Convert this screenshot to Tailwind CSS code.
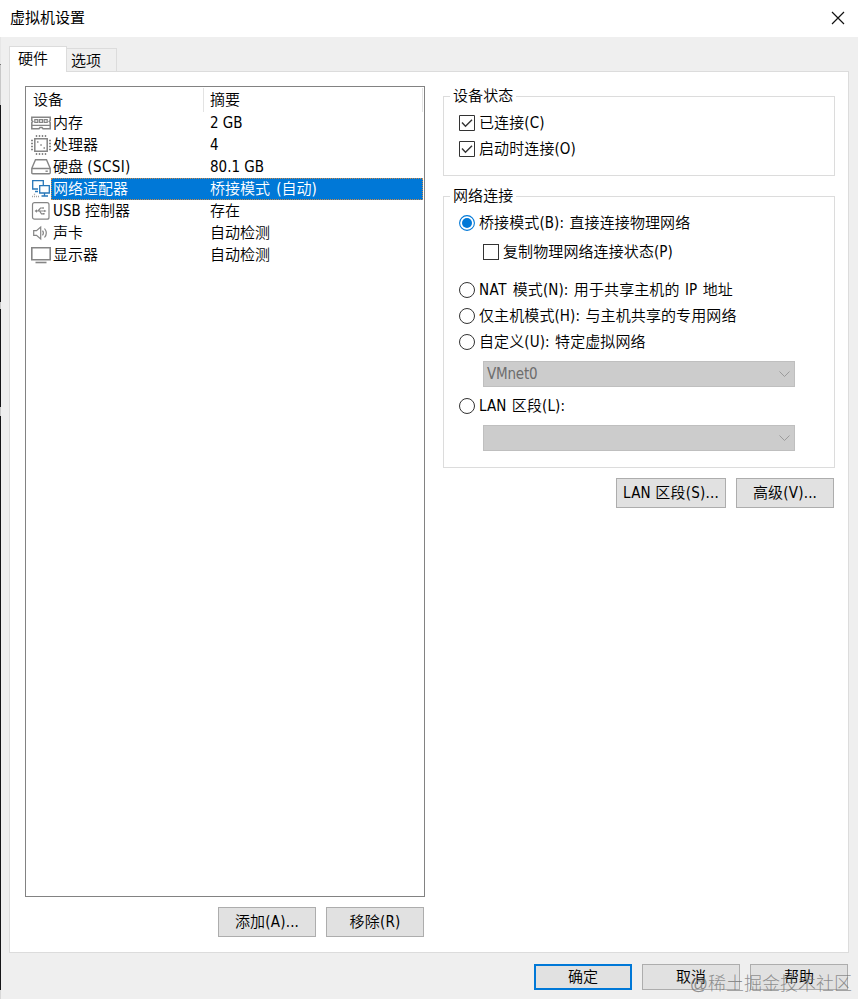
<!DOCTYPE html>
<html lang="zh-CN">
<head>
    <meta charset="UTF-8">
    <meta name="viewport" content="width=device-width, initial-scale=1.0">
    <title>虚拟机设置</title>
    <script src="https://cdn.jsdelivr.net/npm/@tailwindcss/browser@4"></script>
</head>
<body class="relative flex w-[858px] h-[999px] overflow-hidden bg-[#efefef] text-black text-[15px] leading-[20px] font-['DejaVu_Sans_Condensed','Noto_Sans_CJK_SC',sans-serif] font-[350] whitespace-nowrap">
    <div class="flex w-full flex-col">
        <!-- title bar -->
        <header class="flex h-[37px] shrink-0 items-center justify-between bg-white pb-px pl-[10px] pr-[13px]">
            <h1 class="font-normal">虚拟机设置</h1>
            <button aria-label="关闭"><svg class="block size-[14px]" viewBox="0 0 14 14" fill="none" stroke="#111" stroke-width="1.2"><path d="M1 1l12 12M13 1L1 13"/></svg></button>
        </header>

        <div class="flex flex-1">
            <!-- edge of the window behind -->
            <div class="flex w-px shrink-0 flex-col bg-[#161618]">
                <div class="h-[27px] bg-[#e6e6e6]"></div>
                <div class="h-px bg-[#777]"></div>
                <div class="h-[40px] bg-[#c8c8c8]"></div>
                <div class="h-[197px]"></div>
                <div class="h-[7px] bg-[#c8c8c8]"></div>
                <div class="h-[98px]"></div>
                <div class="h-[9px] bg-[#c8c8c8]"></div>
                <div class="h-[574px]"></div>
                <div class="h-[9px] bg-[#d8d8d8]"></div>
            </div>

            <div class="flex flex-1 flex-col pt-[9px] pl-[8px] pr-[9px]">
                <nav class="flex h-[25px] shrink-0 items-end">
                    <div class="relative z-10 h-[26px] w-[58px] self-start border border-b-0 border-[#dcdcdc] bg-white pl-[8px] pt-[2px]">硬件</div>
                    <div class="h-[23px] w-[50px] border border-b-0 border-l-0 border-[#dcdcdc] pl-[4px] pt-[2px]">选项</div>
                </nav>

                <main class="flex h-[882px] shrink-0 border border-[#dcdcdc] bg-white pl-[15px] pt-[14px]">
                    <section class="w-[400px] shrink-0">
                        <div class="h-[811px] border border-[#828282] bg-white">
                            <div class="flex h-[25px] pt-px">
                                <div class="h-[24px] w-[178px] border-r border-[#e3e3e3] pl-[7px] pt-[2px]">设备</div>
                                <div class="h-[24px] w-[219px] border-r border-[#e3e3e3] pl-[6px] pt-[2px]">摘要</div>
                            </div>

                            <div class="flex h-[22px] items-center pl-[5px]">
                                <svg class="h-[20px] w-[20px] shrink-0" viewBox="0 0 20 20" fill="none" stroke="#858585" stroke-width="1.5"><path d="M.8 4.2h18.4v3.3l-1 1 1 1v6.3H12l-1-1.300H9l-1 1.300H.8V9.500l1-1-1-1z"/><path d="M3.800 6.700h3v2.600h-3zM8.500 6.700h3v2.600h-3zM13.200 6.700h3v2.600h-3zM1 12.300h18" stroke-width="1.2"/></svg>
                                <div class="w-[159px] pl-[2px]">内存</div><div>2 GB</div>
                            </div>
                            <div class="flex h-[22px] items-center pl-[5px]">
                                <svg class="h-[20px] w-[20px] shrink-0" viewBox="0 0 20 20" fill="none" stroke="#858585"><path d="M3.800 3.800h12.400v12.400H3.800z" stroke-width="1.500"/><path d="M5.500 0v2M8.500 0v2M11.500 0v2M14.500 0v2M5.500 18v2M8.500 18v2M11.500 18v2M14.500 18v2M0 5.500h2M0 8.500h2M0 11.500h2M0 14.500h2M18 5.500h2M18 8.500h2M18 11.500h2M18 14.500h2M6 7h1.500M9.300 10h1.500M12.500 13h1.500" stroke-width="1.400"/></svg>
                                <div class="w-[159px] pl-[2px]">处理器</div><div>4</div>
                            </div>
                            <div class="flex h-[22px] items-center pl-[5px]">
                                <svg class="h-[20px] w-[20px] shrink-0" viewBox="0 0 20 20" fill="none" stroke="#858585" stroke-width="1.400"><path d="M4.500 2.700h11l3.700 8.600v4.500q0 1-1 1H1.800q-1 0-1-1v-4.500zM1 11.500h18"/><path d="M14.500 14.200h2.300"/></svg>
                                <div class="w-[159px] pl-[2px]">硬盘 <span class="tracking-[0.4px]">(SCSI)</span></div><div>80.1 GB</div>
                            </div>
                            <div class="flex h-[22px] items-center pl-[5px]">
                                <svg class="h-[20px] w-[20px] shrink-0" viewBox="0 0 20 20" fill="none" stroke="#2877b8" stroke-width="1.300"><path d="M7 10H1.700V1.700h10.600V6M4 12.500h3"/><path d="M8.700 6.700h9.600V14H8.700zM13.500 14v2.700M10.500 17h6.500"/><path d="M1 17.500h7M3.500 14.800v2.500" stroke="#a0a0a0" stroke-dasharray="1 1"/></svg>
                                <div class="flex h-[22px] w-[372px] items-center border border-dotted border-[#c98a4b] bg-[#0078d7] text-white">
                                    <div class="w-[158px] pl-px">网络适配器</div><div class="[word-spacing:2px]">桥接模式 (自动)</div>
                                </div>
                            </div>
                            <div class="flex h-[22px] items-center pl-[5px]">
                                <svg class="h-[20px] w-[20px] shrink-0" viewBox="0 0 20 20" fill="none" stroke="#858585" stroke-width="1.200"><rect x="1.500" y="1.700" width="16.500" height="16.500" rx="2"/><path d="M5 10h9M7 10l2.500-3h2M8.500 10l2 2.800h2"/><path d="M3.500 10l2.500-1.700v3.400zM13.200 8.800l2.300 1.200-2.300 1.200zM11.300 6.200h1.600v1.600h-1.600zM12 12h1.600v1.600H12z" fill="#858585" stroke="none"/></svg>
                                <div class="w-[159px] pl-[2px]">USB 控制器</div><div>存在</div>
                            </div>
                            <div class="flex h-[22px] items-center pl-[5px]">
                                <svg class="h-[20px] w-[20px] shrink-0" viewBox="0 0 20 20" fill="none" stroke="#858585" stroke-width="1.200"><path d="M2.700 7.700h2.800L9.700 4v12l-4.200-3.700H2.700z"/><path d="M11.500 7.700q1.800 2.300 0 4.600M13.500 5.500q3.600 4.500 0 9"/></svg>
                                <div class="w-[159px] pl-[2px]">声卡</div><div>自动检测</div>
                            </div>
                            <div class="flex h-[22px] items-center pl-[5px]">
                                <svg class="h-[20px] w-[20px] shrink-0" viewBox="0 0 20 20" fill="none" stroke="#858585" stroke-width="1.600"><path d="M.8 2.800h18.400v11.900H.8z"/><path d="M4.500 17.500h11"/></svg>
                                <div class="w-[159px] pl-[2px]">显示器</div><div>自动检测</div>
                            </div>
                        </div>
                        <div class="mt-[10px] flex justify-end gap-[10px] pr-px">
                            <button class="h-[30px] w-[98px] border border-[#adadad] bg-[#e1e1e1] tracking-[0.2px]">添加(A)...</button>
                            <button class="h-[30px] w-[98px] border border-[#adadad] bg-[#e1e1e1] tracking-[0.2px]">移除(R)</button>
                        </div>
                    </section>

                    <section class="ml-[18px] w-[392px] shrink-0 tracking-[0.1px] [word-spacing:1px]">
                        <fieldset class="h-[90px] border border-[#dcdcdc]">
                            <legend class="ml-[6px] h-[20px] px-[3px]">设备状态</legend>
                            <div class="flex flex-col gap-[6px] pl-[15px] pt-[7px]">
                                <label class="flex items-center gap-[4px]"><svg class="size-[16px]" viewBox="0 0 16 16" fill="none" stroke="#333"><path d="M.5.5h15v15H.5z"/><path d="M3 7.500l3.500 3.700L13 4.700" stroke-width="1.400"/></svg>已连接(C)</label>
                                <label class="flex items-center gap-[4px]"><svg class="size-[16px]" viewBox="0 0 16 16" fill="none" stroke="#333"><path d="M.5.5h15v15H.5z"/><path d="M3 7.500l3.500 3.700L13 4.700" stroke-width="1.400"/></svg>启动时连接(O)</label>
                            </div>
                        </fieldset>

                        <fieldset class="mt-[10px] h-[282px] border border-[#dcdcdc]">
                            <legend class="ml-[6px] h-[20px] px-[3px]">网络连接</legend>
                            <div class="flex flex-col pl-[15px] pt-[7px]">
                                <label class="flex items-center gap-[4px]"><svg class="size-[16px]" viewBox="0 0 16 16"><circle cx="8" cy="8" r="7.400" fill="#fff" stroke="#0078d7" stroke-width="1.100"/><circle cx="8" cy="8" r="5" fill="#0078d7"/></svg>桥接模式(B): 直接连接物理网络</label>
                                <label class="ml-[24px] mt-[9px] flex items-center gap-[4px]"><span class="size-[16px] border border-[#333]"></span>复制物理网络连接状态(P)</label>
                                <label class="mt-[18px] flex items-center gap-[4px]"><span class="size-[16px] rounded-full border border-[#333]"></span><span><span class="tracking-[0.5px]">NAT </span>模式(N): 用于共享主机的 IP 地址</span></label>
                                <label class="mt-[6px] flex items-center gap-[4px]"><span class="size-[16px] rounded-full border border-[#333]"></span>仅主机模式(H): 与主机共享的专用网络</label>
                                <label class="mt-[6px] flex items-center gap-[4px]"><span class="size-[16px] rounded-full border border-[#333]"></span>自定义(U): 特定虚拟网络</label>
                                <div class="ml-[24px] mt-[9px] flex h-[26px] w-[312px] items-center justify-between border border-[#bfbfbf] bg-[#cccccc] pl-[3px] pr-[4px] text-[#6d6d6d]"><span class="tracking-[-0.2px]">VMnet0</span><svg class="h-[6px] w-[11px]" viewBox="0 0 11 6" fill="none" stroke="#9b9b9b"><path d="M.5.500l5 5 5-5"/></svg></div>
                                <label class="mt-[9px] flex items-center gap-[4px]"><span class="size-[16px] rounded-full border border-[#333]"></span><span>LAN 区段(L):</span></label>
                                <div class="ml-[24px] mt-[9px] flex h-[26px] w-[312px] items-center justify-end border border-[#bfbfbf] bg-[#cccccc] pr-[4px]"><svg class="h-[6px] w-[11px]" viewBox="0 0 11 6" fill="none" stroke="#9b9b9b"><path d="M.5.500l5 5 5-5"/></svg></div>
                            </div>
                        </fieldset>
                        <div class="mt-[10px] flex justify-end gap-[10px] pr-px">
                            <button class="h-[30px] w-[110px] border border-[#adadad] bg-[#e1e1e1] tracking-[0.2px]">LAN 区段(S)...</button>
                            <button class="h-[30px] w-[98px] border border-[#adadad] bg-[#e1e1e1] tracking-[0.2px]">高级(V)...</button>
                        </div>
                    </section>
                </main>

                <footer class="mt-[11px] flex justify-end gap-[10px] pr-px">
                    <button class="h-[26px] w-[98px] border-2 border-[#0078d7] bg-[#e1e1e1]">确定</button>
                    <button class="h-[26px] w-[98px] border border-[#adadad] bg-[#e1e1e1]">取消</button>
                    <button class="h-[26px] w-[98px] border border-[#adadad] bg-[#e1e1e1]">帮助</button>
                </footer>
            </div>
        </div>
    </div>
    <!-- watermark -->
    <div class="absolute right-[6px] bottom-[5px] text-[18px] font-light text-[#707070]/75 font-['Liberation_Sans','Noto_Sans_CJK_SC',sans-serif]">@稀土掘金技术社区</div>
</body>
</html>
